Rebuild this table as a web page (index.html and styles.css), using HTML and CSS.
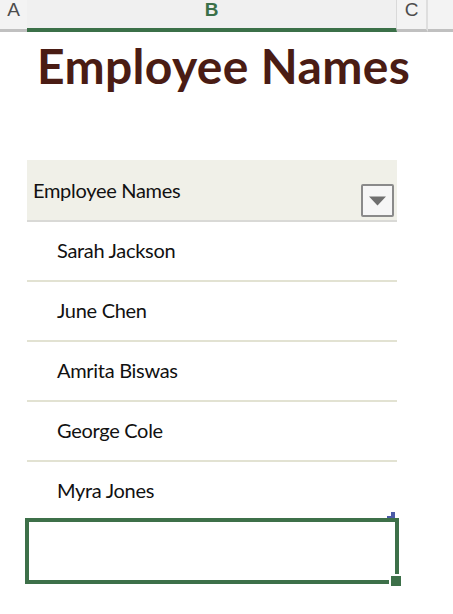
FILE: index.html
```html
<!DOCTYPE html>
<html lang="en">
<head>
<meta charset="utf-8">
<title>Employee Names</title>
<link rel="stylesheet" href="styles.css">
</head>
<body>
<div class="sheet">
  <div class="colhead">
    <div class="ch ch-a">A</div>
    <div class="ch ch-b">B</div>
    <div class="ch ch-c">C</div>
    <div class="ch ch-rest"></div>
  </div>
  <div class="grid">
    <div class="title-row">
      <h1 class="title">Employee Names</h1>
    </div>
    <div class="table">
      <div class="th">
        <span class="th-label">Employee Names</span>
        <span class="dd">
          <svg width="17" height="10" viewBox="0 0 17 10"><path d="M0 0.5 H17 L8.5 9.5 Z" fill="#6f6f6f"/></svg>
        </span>
      </div>
      <div class="td">Sarah Jackson</div>
      <div class="td">June Chen</div>
      <div class="td">Amrita Biswas</div>
      <div class="td">George Cole</div>
      <div class="td">Myra Jones</div>
    </div>
    <div class="selected">
      <svg class="marker" width="8" height="6" viewBox="0 0 8 6"><path d="M4 0 H8 V6 H0 V4 H4 Z" fill="#4b5aa6"/></svg>
      <span class="handle"></span>
    </div>
  </div>
</div>
</body>
</html>
```
FILE: styles.css
```css
* { box-sizing: border-box; }
html, body { margin: 0; padding: 0; background: #ffffff; }
body { width: 453px; height: 614px; overflow: hidden; font-family: Lato, "Open Sans", sans-serif; }

.sheet { display: flex; flex-direction: column; }

.colhead {
  display: flex;
  height: 32px;
  background: #f3f3f3;
}
.ch {
  height: 32px;
  border-bottom: 3px solid #c0c0c0;
  font-family: "Liberation Sans", Arial, sans-serif;
  font-size: 19px;
  line-height: 19px;
  padding-top: 0;
  color: #4d4d4d;
  text-align: center;
}
.ch-a { width: 27px; }
.ch-b {
  width: 370px;
  color: #3b7048;
  font-weight: bold;
  border-bottom: 4px solid #3b7048;
  border-right: 1px solid #d9d9d9;
  background: #f0f0f0;
}
.ch-c { width: 31px; border-right: 2px solid #dedede; }
.ch-rest { flex: 1; }

.grid {
  padding-left: 27px;
  width: 397px;
  display: flex;
  flex-direction: column;
}

.title-row {
  height: 128px;
  padding-top: 10px;
}
.title {
  margin: 0 0 0 10px;
  font-family: Lato, sans-serif;
  font-weight: 700;
  font-size: 48px;
  line-height: 48px;
  letter-spacing: 0.35px;
  color: #4a1c14;
  white-space: nowrap;
}

.table { display: flex; flex-direction: column; }

.th {
  height: 62px;
  background: #f0f0e8;
  border-bottom: 2px solid #d9d9d6;
  display: flex;
  align-items: flex-end;
  justify-content: space-between;
  padding: 0 3px 3px 6px;
}
.th-label {
  font-size: 20px;
  color: #111;
  align-self: center;
  padding-top: 3px;
  letter-spacing: -0.3px;
}
.dd {
  width: 33px;
  height: 33px;
  border: 2px solid #8a8a8a;
  border-radius: 2px;
  background: #f6f6f6;
  display: flex;
  align-items: center;
  justify-content: center;
}
.dd svg { display: block; margin-top: 1px; }

.td {
  height: 60px;
  border-bottom: 2px solid #e2e2d2;
  display: flex;
  align-items: center;
  padding-left: 30px;
  padding-bottom: 2px;
  font-size: 20px;
  color: #111;
  letter-spacing: -0.3px;
}

.selected {
  position: relative;
  margin: -4px 0 0 -2px;
  width: 374px;
  height: 66px;
  border: 4px solid #3d7049;
}
.marker {
  position: absolute;
  right: 0;
  top: -10px;
  display: block;
}
.handle {
  position: absolute;
  right: -6px;
  bottom: -6px;
  width: 10px;
  height: 10px;
  background: #3d7049;
  box-shadow: 0 0 0 2px #ffffff;
}
```
